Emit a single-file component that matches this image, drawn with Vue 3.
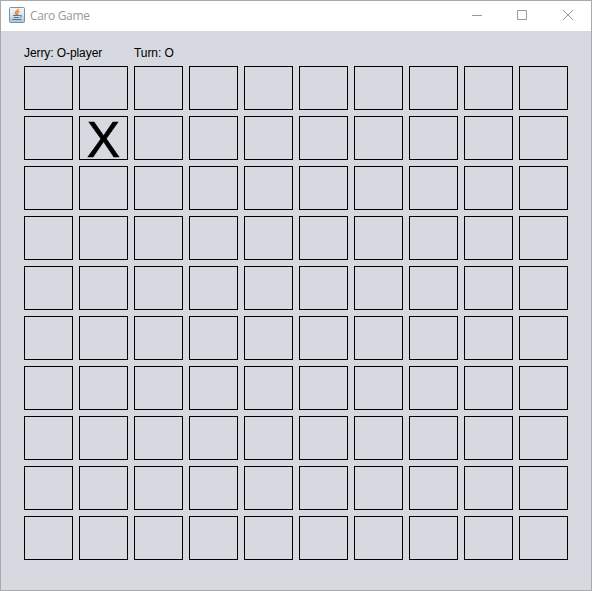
<script setup>
import { ref } from 'vue'

const marks = ref({ 11: 'X' })
</script>

<template>
  <div class="window">
    <header class="titlebar">
      <svg class="logo" width="16" height="16" viewBox="0 0 16 16">
        <defs>
          <linearGradient id="tile" x1="0" y1="0" x2="0" y2="1">
            <stop offset="0" stop-color="#f4f7f9" />
            <stop offset="0.5" stop-color="#dbe5ed" />
            <stop offset="1" stop-color="#a9c3d6" />
          </linearGradient>
        </defs>
        <rect x="0.5" y="0.5" width="15" height="15" rx="1" fill="url(#tile)" stroke="#7893a8" />
        <path d="M9.2 1.8C9.6 3.7 5.9 4.3 6.4 6C6.6 6.8 7.2 7.2 7.4 8M10.4 4.3C7.7 5.3 8.1 5.9 8.5 6.6C8.8 7.2 8.4 7.7 8 8" fill="none" stroke="#ec7f25" stroke-width="1.4" />
        <path d="M4 8.5H10.8M4.8 10.5H10.2M11 8.4C13.2 7.8 13.1 10 11 10.6M3.2 12.5H12.4" fill="none" stroke="#4a7598" stroke-width="1" />
      </svg>
      <span class="title">Caro Game</span>
      <div class="controls">
        <svg class="control" width="46" height="30" viewBox="0 0 46 30">
          <path d="M19 14.5H29" />
        </svg>
        <svg class="control" width="46" height="30" viewBox="0 0 46 30">
          <path d="M18.5 9.5H27.5V18.5H18.5Z" />
        </svg>
        <svg class="control" width="46" height="30" viewBox="0 0 46 30">
          <path d="M18 9L28 19M28 9L18 19" />
        </svg>
      </div>
    </header>
    <main class="game">
      <div class="status">
        <span class="player">Jerry: O-player</span>
        <span>Turn: O</span>
      </div>
      <div class="board">
        <div v-for="(_, i) in 100" :key="i" class="cell">{{ marks[i] }}</div>
      </div>
    </main>
  </div>
</template>

<style>
body {
  margin: 0;
  overflow: hidden;
}
</style>

<style scoped>
.window {
  box-sizing: border-box;
  width: 592px;
  height: 591px;
  border: 1px solid #a9a9a9;
  background: #d6d9df;
  display: flex;
  flex-direction: column;
}
.titlebar {
  height: 30px;
  flex: none;
  display: flex;
  align-items: center;
  background: #fff;
  padding-left: 8px;
}
.logo {
  margin: 0 5px 2px 0;
}
.title {
  font: 12px/16px "Open Sans", "Noto Sans", sans-serif;
  color: #999;
  letter-spacing: -0.35px;
}
.controls {
  display: flex;
  margin-left: auto;
}
.control {
  display: block;
  fill: none;
  stroke: #999;
  stroke-width: 1;
}
.game {
  padding: 14px 23px 0;
  font-family: "Liberation Sans", Arial, sans-serif;
  color: #000;
}
.status {
  display: flex;
  height: 21px;
  font-size: 12px;
  line-height: 16px;
  letter-spacing: -0.08px;
}
.player {
  width: 110px;
}
.board {
  display: grid;
  grid-template-columns: repeat(10, 49px);
  grid-auto-rows: 44px;
  gap: 6px;
}
.cell {
  box-sizing: border-box;
  border: 1px solid #000;
  padding-top: 5px;
  display: flex;
  align-items: center;
  justify-content: center;
  font-size: 50px;
  line-height: 37px;
  -webkit-text-stroke: 0.6px #000;
}
</style>
